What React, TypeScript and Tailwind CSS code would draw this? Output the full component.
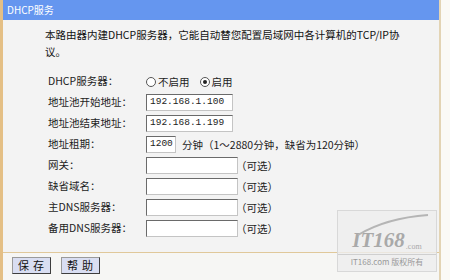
import React from 'react';

const font = { fontFamily: '"Noto Sans CJK SC", "Liberation Sans", sans-serif' };

const Row: React.FC<{ label: string; children: React.ReactNode }> = ({ label, children }) => (
  <div className="flex items-center h-[21px]">
    <div className="w-[98px] text-[10.5px] text-[#1c1c1c] leading-none">{label}</div>
    <div className="flex items-center">{children}</div>
  </div>
);

const Field: React.FC<{ value?: string; w: string }> = ({ value, w }) => (
  <div
    className={`${w} h-[17px] bg-white border border-[#6a6a6a] border-r-[#c4c4c4] border-b-[#c4c4c4] flex items-center pl-[3px] text-[9.5px] text-[#222]`}
    style={{ fontFamily: '"Liberation Mono", monospace' }}
  >
    {value}
  </div>
);

const Radio: React.FC<{ checked?: boolean }> = ({ checked }) => (
  <span className="w-[10px] h-[10px] rounded-full border border-[#555] bg-white flex items-center justify-center mr-[2px]">
    {checked && <span className="w-[4px] h-[4px] rounded-full bg-[#222]" />}
  </span>
);

const Optional = () => <span className="-ml-[2px] text-[10.5px] text-[#1c1c1c]">（可选）</span>;

export default function App() {
  return (
    <div className="w-[450px] h-[280px] flex bg-[#fbfaf6] overflow-hidden" style={font}>
      {/* left edge */}
      <div className="w-[3px] h-full bg-[#e4bf85]" />

      <div className="w-[438px] flex flex-col border-r-2 border-[#e3d4b4]">
        {/* title bar */}
        <div className="h-[20px] bg-[#6596ef] flex items-center pl-[4px] text-[10px] text-white leading-none">
          DHCP服务
        </div>

        {/* body */}
        <div className="flex-1 bg-[#f3f3f3] flex flex-col pl-[42px] pt-[6px] relative">
          <p className="text-[10.5px] leading-[17px] text-[#111]">
            本路由器内建DHCP服务器，它能自动替您配置局域网中各计算机的TCP/IP协
            <br />
            议。
          </p>

          <div className="flex flex-col mt-[11px] pl-[3px]">
            <Row label="DHCP服务器：">
              <div className="flex items-center text-[10.5px] text-[#1c1c1c]">
                <Radio />
                <span className="mr-[10px]">不启用</span>
                <Radio checked />
                <span>启用</span>
              </div>
            </Row>
            <Row label="地址池开始地址：">
              <Field value="192.168.1.100" w="w-[87px]" />
            </Row>
            <Row label="地址池结束地址：">
              <Field value="192.168.1.199" w="w-[87px]" />
            </Row>
            <Row label="地址租期：">
              <Field value="1200" w="w-[30px]" />
              <span className="ml-[6px] text-[10.5px] text-[#1c1c1c]">分钟（1～2880分钟，缺省为120分钟）</span>
            </Row>
            <Row label="网关：">
              <Field w="w-[92px]" />
              <Optional />
            </Row>
            <Row label="缺省域名：">
              <Field w="w-[92px]" />
              <Optional />
            </Row>
            <Row label="主DNS服务器：">
              <Field w="w-[92px]" />
              <Optional />
            </Row>
            <Row label="备用DNS服务器：">
              <Field w="w-[92px]" />
              <Optional />
            </Row>
          </div>

          {/* watermark */}
          <div className="absolute right-[2px] bottom-[-20px] w-[100px] h-[62px] border border-[#d8d8d8] bg-[#eeeeee]/80 flex flex-col items-center justify-end pb-[3px]">
            <svg className="absolute top-[2px] left-[18px]" width="74" height="24" viewBox="0 0 74 24">
              <path d="M2 22 C22 10 44 4 72 2" stroke="#b5b5b5" strokeWidth="2" fill="none" />
            </svg>
            <div className="flex items-end italic font-bold text-[21px] text-[#a9a9a9] leading-none" style={{ fontFamily: '"Liberation Serif", serif' }}>
              IT168<span className="text-[8px] font-normal not-italic ml-[1px]">.com</span>
            </div>
            <div className="mt-[3px] w-full border-t border-[#cfcfcf] text-center text-[8px] text-[#999] pt-[1px]">IT168.com 版权所有</div>
          </div>
        </div>

        {/* footer */}
        <div className="h-[28px] border-t border-[#e0c89a] bg-[#f6f6f4] flex items-center pl-[9px] gap-[10px] pb-[2px]">
          <button className="w-[39px] h-[17px] bg-[#d9def2] border border-[#3d3d3d] border-l-[#9a9a9a] border-t-[#9a9a9a] text-[11px] text-[#111] leading-none tracking-[4px] pl-[3px]">
            保存
          </button>
          <button className="w-[39px] h-[17px] bg-[#d9def2] border border-[#3d3d3d] border-l-[#9a9a9a] border-t-[#9a9a9a] text-[11px] text-[#111] leading-none tracking-[4px] pl-[3px]">
            帮助
          </button>
        </div>
      </div>
      <div className="flex-1 bg-[#fbfaf6]" />
    </div>
  );
}
